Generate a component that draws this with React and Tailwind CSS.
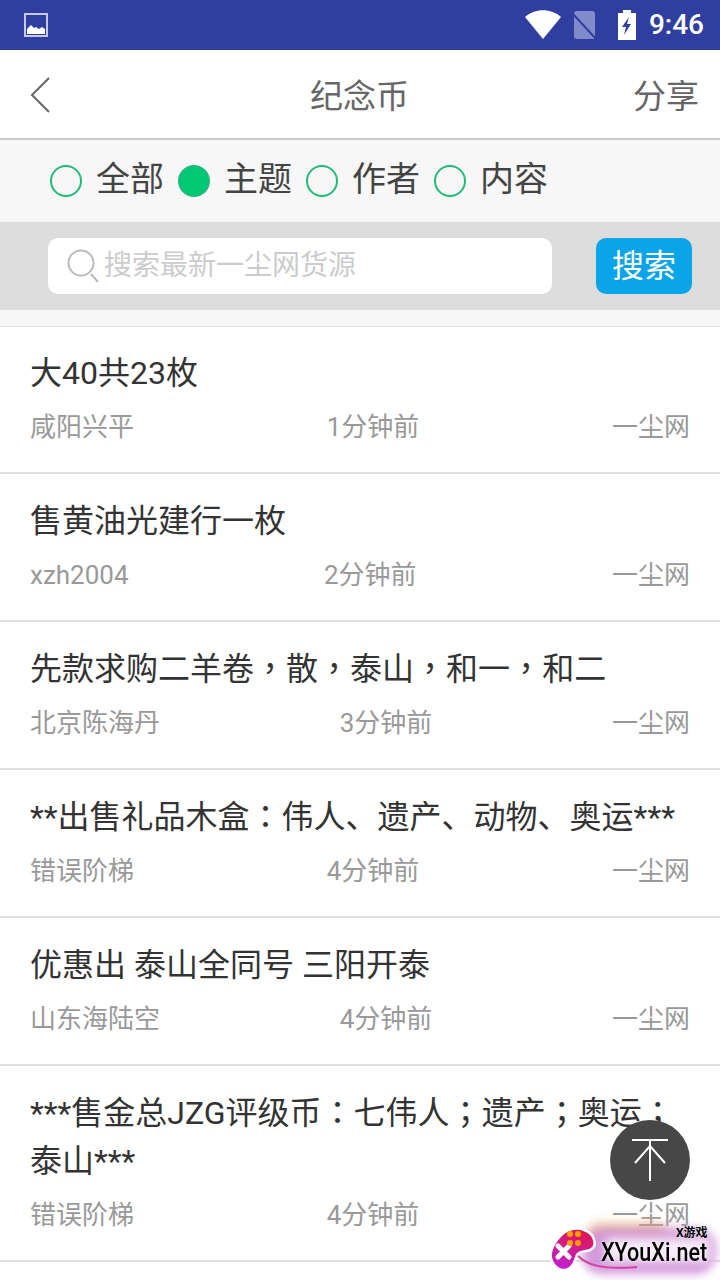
import { useState } from "react";

const rows = [
  { title: "大40共23枚", name: "咸阳兴平", time: "1分钟前" },
  { title: "售黄油光建行一枚", name: "xzh2004", time: "2分钟前" },
  { title: "先款求购二羊卷，散，泰山，和一，和二", name: "北京陈海丹", time: "3分钟前" },
  { title: "**出售礼品木盒：伟人、遗产、动物、奥运***", name: "错误阶梯", time: "4分钟前" },
  { title: "优惠出 泰山全同号 三阳开泰", name: "山东海陆空", time: "4分钟前" },
  { title: "***售金总JZG评级币：七伟人；遗产；奥运；泰山***", name: "错误阶梯", time: "4分钟前" },
];

const tabs = ["全部", "主题", "作者", "内容"];

const StatusBar = () => (
  <div className="h-[50px] bg-[#303f9f] flex items-center pl-6 pr-[16px]">
    <svg width="24" height="24" viewBox="0 0 24 24" fill="none">
      <rect x="1" y="1" width="22" height="22" stroke="#c5cae9" strokeWidth="2" />
      <path d="M3 21v-5l4-4 3 3 2-1 3 2 3-2 3 2v5z" fill="#fff" />
    </svg>
    <svg className="ml-auto" width="36" height="30" viewBox="0 0 36 30">
      <path d="M0 7C10-2 26-2 36 7L18 29z" fill="#fff" />
    </svg>
    <svg className="ml-[11px]" width="26" height="30" viewBox="0 0 26 30">
      <path d="M2 4a3 3 0 0 1 3-3h15a3 3 0 0 1 3 3v23a2 2 0 0 1-2 2H5a3 3 0 0 1-3-3z" fill="#7f8bcb" />
      <path d="M0 3l25 27" stroke="#303f9f" strokeWidth="2" />
    </svg>
    <svg className="ml-[19px]" width="20" height="30" viewBox="0 0 20 30">
      <path d="M6 0h8v3h5v27H1V3h5z" fill="#fff" />
      <path d="M12 7l-7 10h4l-2 8 7-11h-4l2-7z" fill="#303f9f" />
    </svg>
    <span className="ml-[12px] text-[28px] leading-none text-white font-medium font-['Roboto',sans-serif]">9:46</span>
  </div>
);

const Header = () => (
  <div className="h-[90px] bg-white border-b-2 border-[#cccccc] grid grid-cols-3 items-center pl-[30px] pr-[21px]">
    <svg width="20" height="36" viewBox="0 0 20 36" fill="none" className="mt-[2px]">
      <path d="M19 1L2 18l17 17" stroke="#666" strokeWidth="2" />
    </svg>
    <span className="text-[33px] leading-none text-[#666] text-center mr-[10px] mt-[4px]">纪念币</span>
    <span className="text-[33px] leading-none text-[#666] text-right mt-[4px]">分享</span>
  </div>
);

const Filters = ({ active, setActive }) => (
  <div className="h-[82px] bg-[#f7f7f7] flex items-center pl-[50px]">
    {tabs.map((tab, i) => (
      <button key={tab} onClick={() => setActive(i)} className="flex items-center w-[128px]">
        <span
          className={
            i === active
              ? "w-8 h-8 rounded-full border-2 border-[#1fba7c] bg-[#00c875]"
              : "w-8 h-8 rounded-full border-2 border-[#1fba7c]"
          }
        ></span>
        <span className="ml-[14px] -mt-[4px] text-[34px] leading-none text-[#444]">{tab}</span>
      </button>
    ))}
  </div>
);

const SearchBar = () => (
  <div className="h-[88px] bg-[#dddddd] flex items-center pl-12 pr-7">
    <div className="w-[504px] h-14 bg-white rounded-[10px] flex items-center pl-[18px]">
      <svg width="34" height="34" viewBox="0 0 34 34" fill="none">
        <circle cx="15" cy="14" r="12.5" stroke="#bbb" strokeWidth="2" />
        <path d="M25 25l7 8" stroke="#bbb" strokeWidth="2" />
      </svg>
      <span className="ml-[4px] text-[28px] leading-none text-[#cccccc]">搜索最新一尘网货源</span>
    </div>
    <button className="ml-auto w-24 h-14 bg-[#0aa5e8] rounded-[10px] text-[32px] leading-none text-white">搜索</button>
  </div>
);

// ，：； sit centred in the box in the reference, the TC cut does that
const Title = ({ text }) =>
  text.split(/([，：；])/).map((part, i) =>
    i % 2 === 1 ? (
      <span key={i} className="leading-none font-['Noto_Sans_CJK_TC',sans-serif]">{part}</span>
    ) : (
      part
    )
  );

const Row = ({ title, name, time }) => (
  <div className="bg-white border-b-2 border-[#e0e0e0] pl-[30px] pr-[30px] pt-[23px] first:pt-[22px] pb-[27px]">
    <div className="text-[32px] leading-[48px] text-[#333]">
      <Title text={title} />
    </div>
    <div className="mt-3 flex justify-between text-[26px] leading-[36px] text-[#999]">
      <span>{name}</span>
      <span>{time}</span>
      <span>一尘网</span>
    </div>
  </div>
);

const Watermark = () => (
  <div className="absolute left-[548px] top-[1222px] w-[172px] h-[58px]">
    <div className="absolute left-[40px] top-[2px] w-[80px] h-[18px] rounded-full bg-[#e8a860] blur-[6px] opacity-70"></div>
    <div className="absolute left-[34px] top-[6px] w-[134px] h-[46px] rounded-[20px] bg-[#cf8fd8] blur-[5px] opacity-90"></div>
    <div className="absolute left-[58px] top-[16px] w-[104px] h-[24px] bg-white blur-[5px] opacity-80"></div>
    <svg className="absolute left-[29px] top-[32px]" width="70" height="20" viewBox="0 0 70 20" fill="none">
      <path d="M0 1c10 10 24 15 60 12" stroke="#d6409f" strokeWidth="2" />
    </svg>
    <svg className="absolute left-0 top-[3px]" width="50" height="48" viewBox="0 0 50 48">
      <defs>
        <linearGradient id="pad" x1="0.6" y1="0" x2="0.3" y2="1">
          <stop offset="0" stopColor="#e0164f" />
          <stop offset="1" stopColor="#c020d8" />
        </linearGradient>
      </defs>
      <path
        d="M3 27C5 18 14 6 24 4c8-2 18 2 21 8 3 6 2 11-3 13-6 2-10 1-13 5-2 6-4 13-11 15C10 46 1 38 3 27z"
        fill="url(#pad)"
        stroke="#fff"
        strokeWidth="2.5"
      />
      <path d="M10 21l11 11M21 21L10 32" stroke="#fff" strokeWidth="5" strokeLinecap="round" />
      <circle cx="22" cy="9" r="3" fill="#ffa000" />
      <circle cx="30" cy="9" r="3" fill="#ffa000" />
      <circle cx="22" cy="18" r="3" fill="#ffa000" />
      <circle cx="30" cy="18" r="3" fill="#ffa000" />
    </svg>
    <span className="absolute left-[128px] top-[5px] text-[12px] leading-none font-bold text-black whitespace-nowrap [text-shadow:0_0_2px_#fff]">X游戏</span>
    <span className="absolute left-[53px] top-[15px] text-[26px] leading-[30px] font-medium text-black whitespace-nowrap origin-left scale-x-[0.83] font-['Roboto',sans-serif] [text-shadow:0_0_3px_#fff]">XYouXi.net</span>
  </div>
);

export default function App() {
  const [active, setActive] = useState(1);

  return (
    <div className="relative w-[720px] h-[1280px] overflow-hidden bg-white font-['Roboto','Noto_Sans_CJK_SC',sans-serif]">
      <StatusBar />
      <Header />
      <Filters active={active} setActive={setActive} />
      <SearchBar />
      <div className="h-[17px] bg-[#f7f7f7] border-b border-[#e5e5e5]"></div>
      <div>
        {rows.map((row, i) => (
          <Row key={i} {...row} />
        ))}
      </div>
      {/* back to top */}
      <button className="absolute left-[610px] top-[1120px] w-20 h-20 rounded-full bg-[#474747] flex items-center justify-center">
        <svg width="36" height="42" viewBox="0 0 36 42" fill="none">
          <path d="M0 1h36M18 1v41M3 24L18 7l15 17" stroke="#fff" strokeWidth="2" />
        </svg>
      </button>
      <Watermark />
    </div>
  );
}
